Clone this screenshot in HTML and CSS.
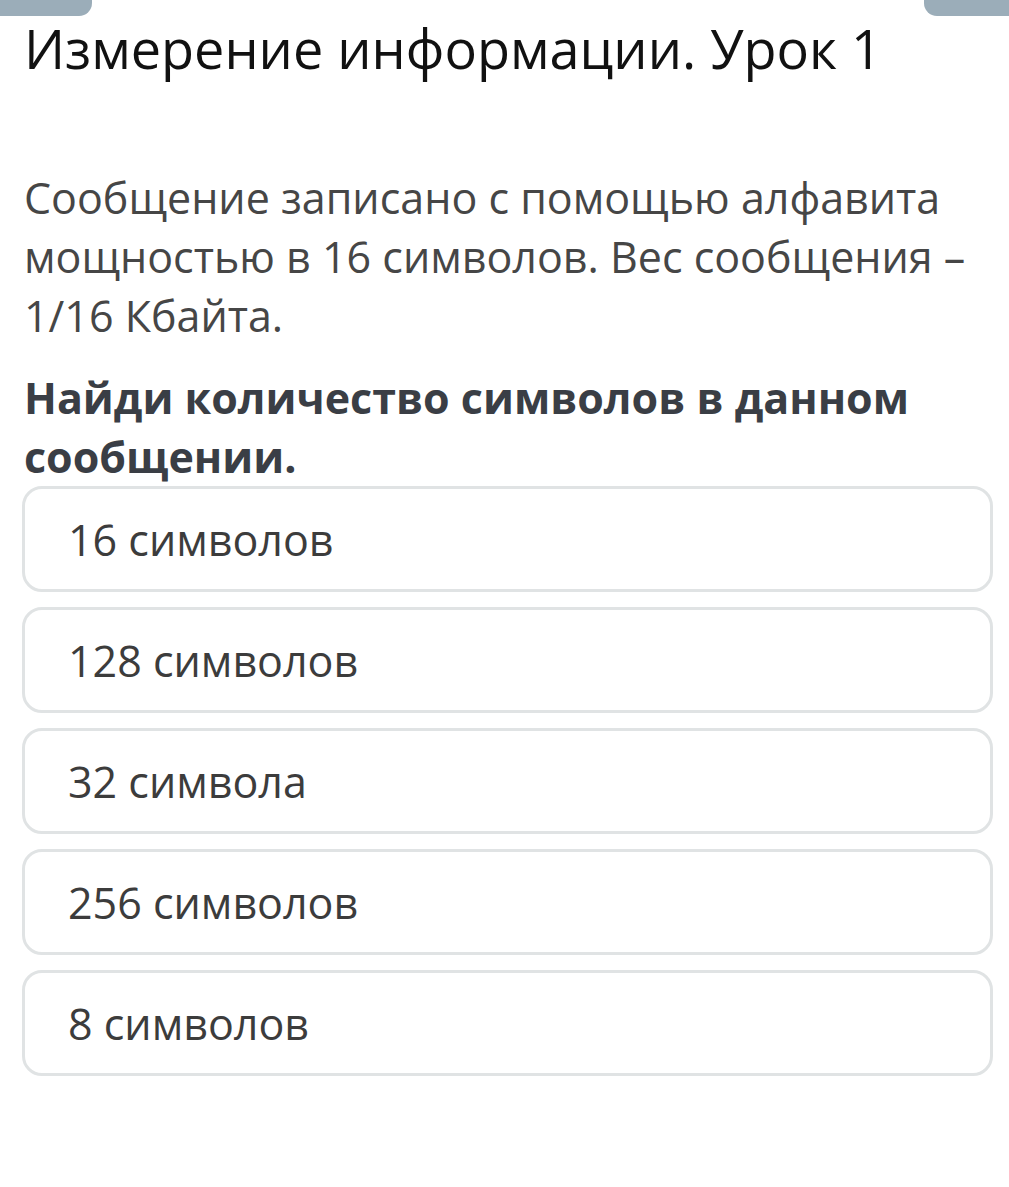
FILE: index.html
```html
<!DOCTYPE html>
<html lang="ru">
<head>
<meta charset="utf-8">
<title>Измерение информации. Урок 1</title>
<link rel="stylesheet" href="styles.css">
</head>
<body>
<div class="tabs">
  <div class="tab tab-left"></div>
  <div class="tab tab-right"></div>
</div>
<main class="page">
  <h1 class="title">Измерение информации. Урок 1</h1>
  <p class="text">Сообщение записано с помощью алфавита мощностью в 16 символов. Вес сообщения – 1/16 Кбайта.</p>
  <p class="question">Найди количество символов в данном сообщении.</p>
  <div class="options">
    <div class="option">16 символов</div>
    <div class="option">128 символов</div>
    <div class="option">32 символа</div>
    <div class="option">256 символов</div>
    <div class="option">8 символов</div>
  </div>
</main>
</body>
</html>
```
FILE: styles.css
```css
html, body {
  margin: 0;
  padding: 0;
  background: #ffffff;
}
body {
  font-family: "Open Sans", "Noto Sans", sans-serif;
  width: 1009px;
  height: 1187px;
  overflow: hidden;
}
.tabs {
  display: flex;
  justify-content: space-between;
  height: 16px;
}
.tab {
  background: #9badb9;
  height: 16px;
}
.tab-left {
  width: 92px;
  border-bottom-right-radius: 13px;
}
.tab-right {
  width: 85px;
  border-bottom-left-radius: 13px;
}
.page {
  padding: 0 16px 0 22px;
}
.title {
  margin: 0 0 0 2px;
  font-weight: 400;
  font-size: 54px;
  line-height: 64px;
  color: #111111;
}
.text {
  margin: 88px 0 0 2px;
  font-size: 43px;
  line-height: 59px;
  color: #464646;
}
.question {
  margin: 23px 0 0 2px;
  font-size: 43px;
  line-height: 59px;
  font-weight: 700;
  color: #3a3e45;
}
.options {
  display: flex;
  flex-direction: column;
  gap: 15px;
}
.option {
  height: 100px;
  border: 3px solid #e0e3e4;
  border-radius: 20px;
  display: flex;
  align-items: center;
  padding-left: 43px;
  font-size: 43px;
  color: #3c3c3c;
}
```
